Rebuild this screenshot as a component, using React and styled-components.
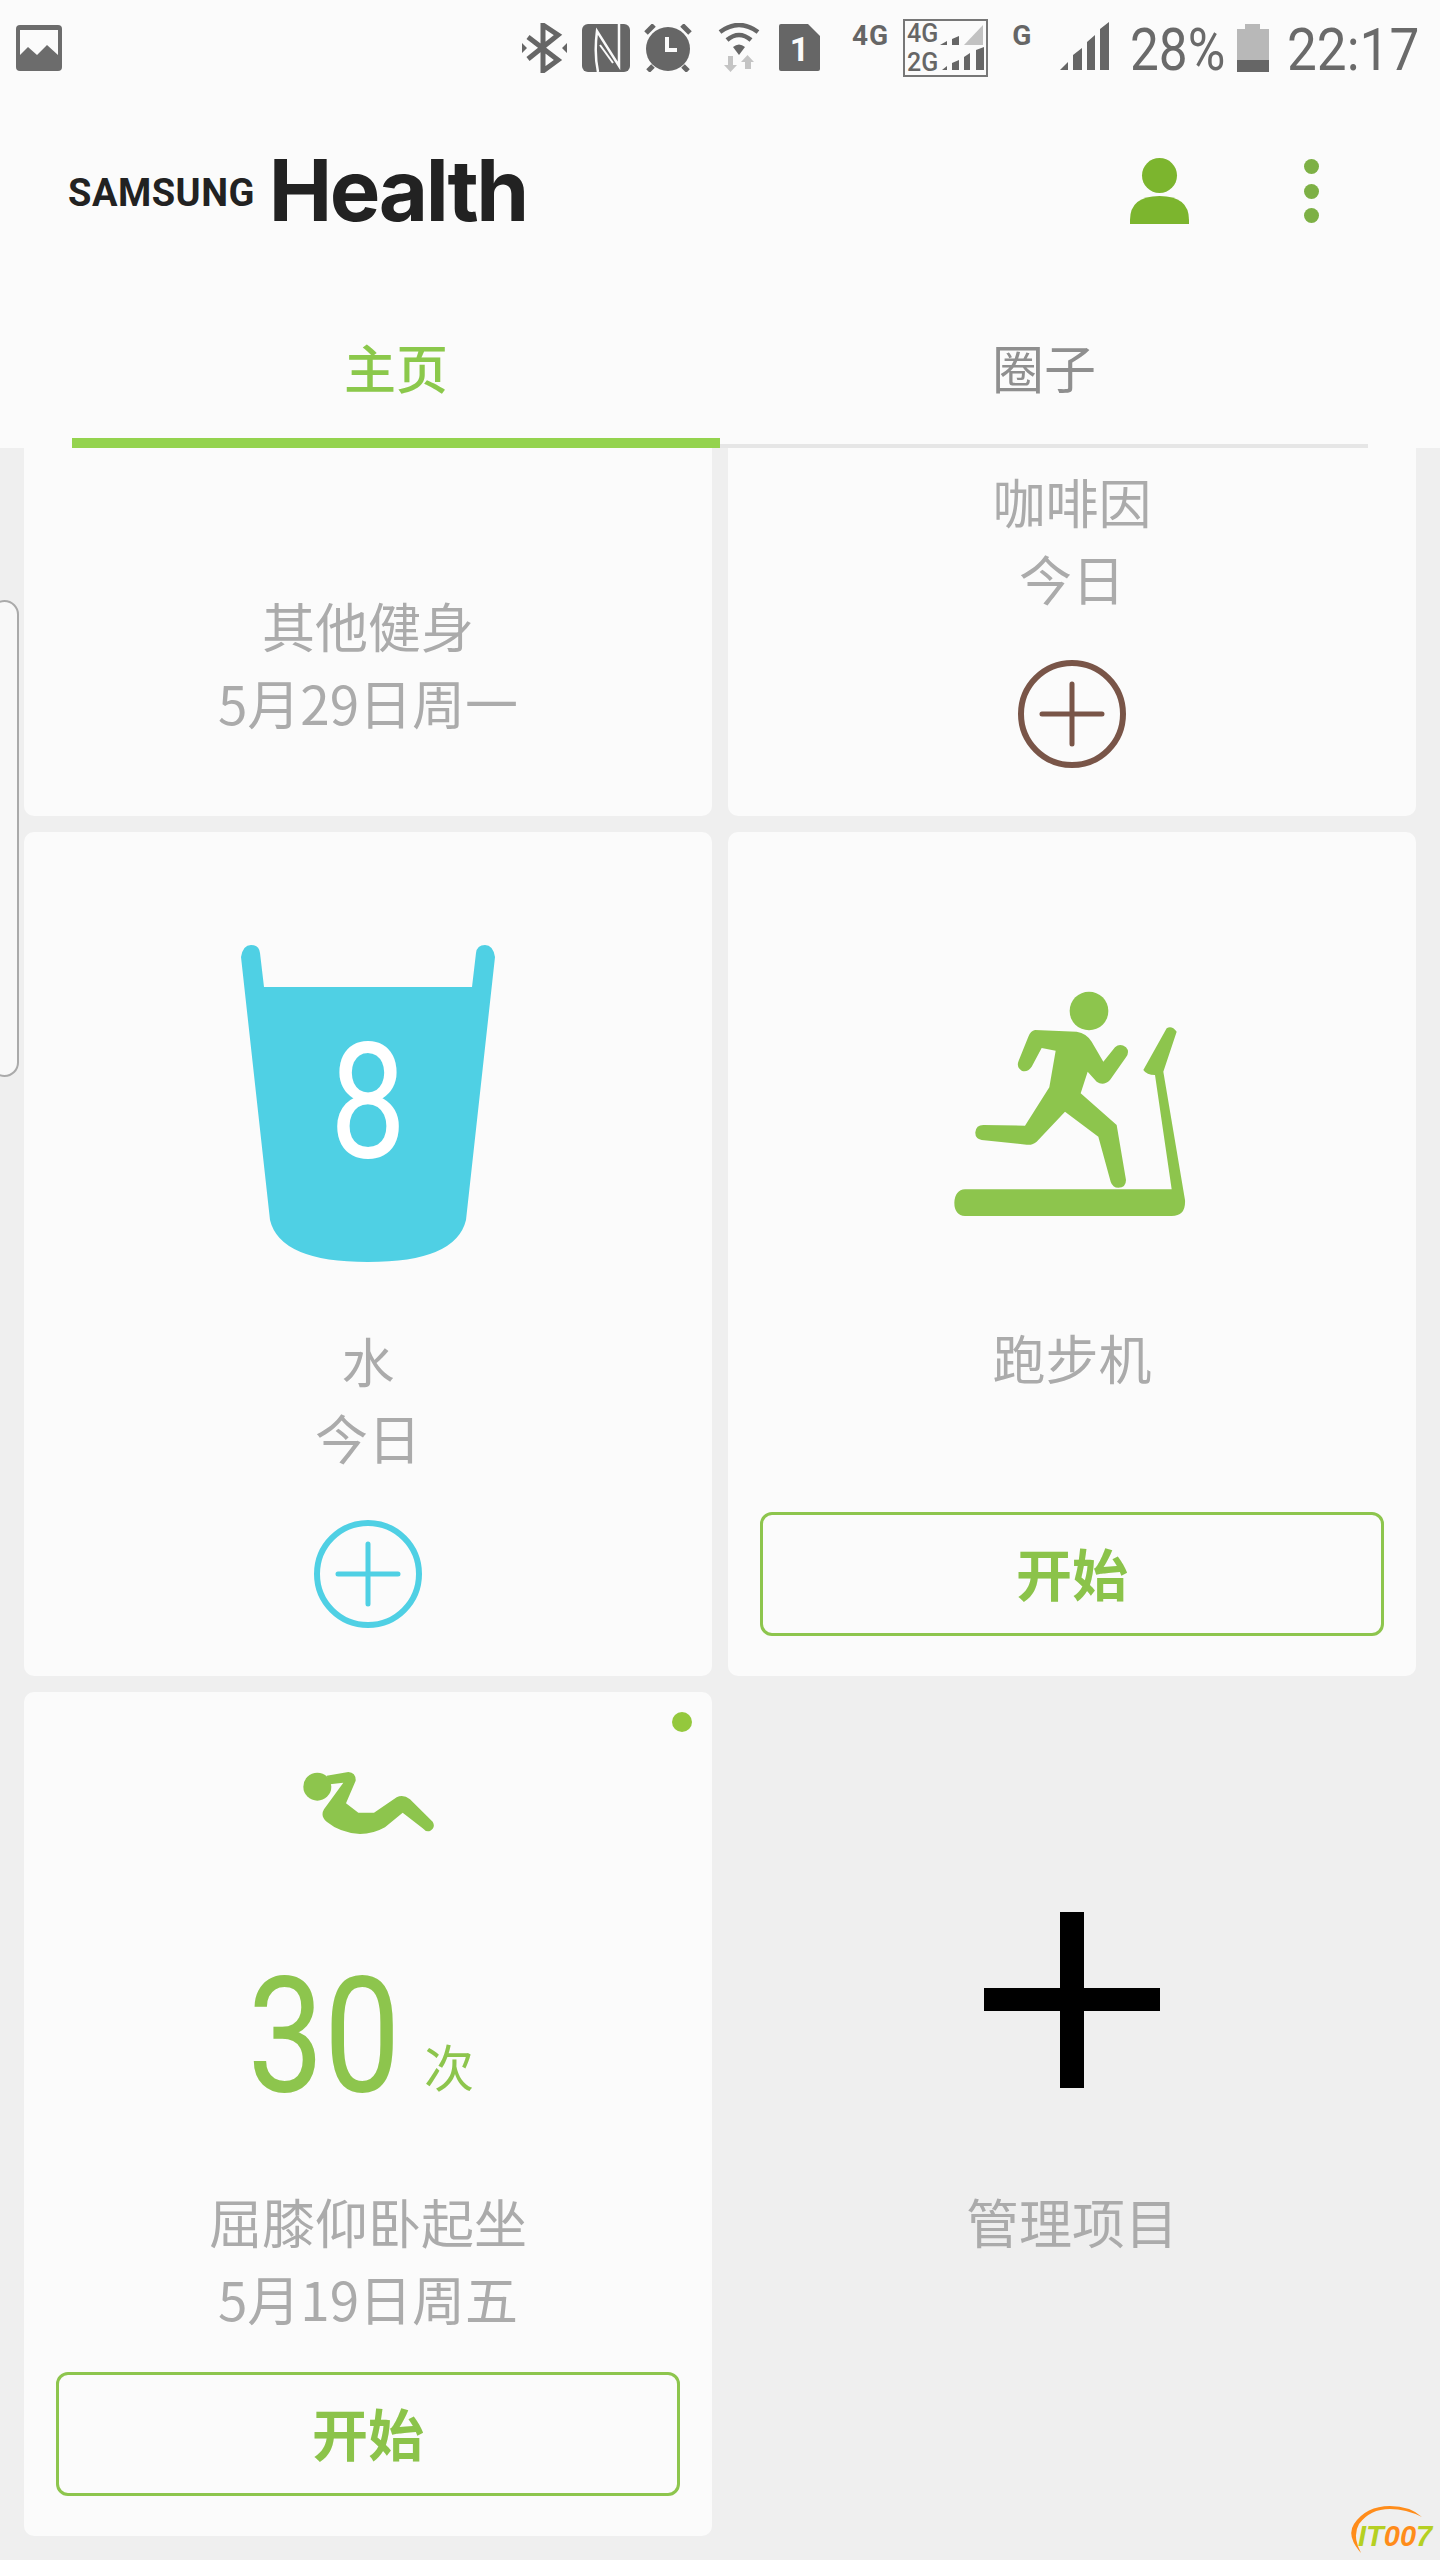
import React from 'react';
import styled, { createGlobalStyle } from 'styled-components';

const CJK = `"Noto Sans CJK SC", "Noto Sans", sans-serif`;

const GlobalStyle = createGlobalStyle`
  html, body {
    margin: 0;
    padding: 0;
    background: #efefef;
  }
  * {
    box-sizing: border-box;
  }
`;

const Page = styled.div`
  position: relative;
  width: 1440px;
  height: 2560px;
  overflow: hidden;
  background: #efefef;
  font-family: ${CJK};
`;

const Header = styled.header`
  background: #fbfbfb;
  height: 448px;
`;

const StatusBar = styled.div`
  display: flex;
  align-items: flex-start;
  height: 96px;
  padding: 0 22px 0 16px;
  color: #666;
`;

const StatusIcon = styled.svg`
  display: block;
  flex: none;
  margin-left: ${(p) => p.$ml || 0}px;
  margin-top: ${(p) => p.$mt || 0}px;
`;

const StatusText = styled.span`
  flex: none;
  width: ${(p) => p.$w}px;
  margin-left: ${(p) => p.$ml || 0}px;
  font-family: Roboto, sans-serif;
  font-size: 59px;
  line-height: 70px;
  margin-top: 15px;
  color: #6a6a6a;
  white-space: nowrap;
  transform: scaleX(${(p) => p.$sx});
  transform-origin: left center;
`;

const SmallNet = styled.span`
  flex: none;
  margin-left: ${(p) => p.$ml || 0}px;
  margin-top: 19px;
  font-family: Roboto, sans-serif;
  font-size: 28px;
  font-weight: 700;
  line-height: 34px;
  letter-spacing: 1px;
  color: #666;
`;

const AppBar = styled.div`
  display: flex;
  align-items: center;
  height: 190px;
  padding: 0 121px 0 68px;
`;

const Logo = styled.div`
  display: flex;
  align-items: baseline;
  gap: 14px;
  color: #222;
  margin-right: auto;
`;

const LogoBrand = styled.span`
  font-family: Roboto, sans-serif;
  font-size: 38px;
  font-weight: 700;
  letter-spacing: 0.5px;
  transform: translateY(-15px);
`;

const LogoName = styled.span`
  font-family: Inter, sans-serif;
  font-size: 85px;
  font-weight: 700;
  letter-spacing: -2.5px;
  line-height: 90px;
`;

const Dots = styled.div`
  display: flex;
  flex-direction: column;
  gap: 9.5px;
  margin-left: 115px;
`;

const Dot = styled.span`
  width: 15px;
  height: 15px;
  border-radius: 50%;
  background: #7db045;
`;

const Tabs = styled.div`
  display: flex;
  height: 162px;
  margin: 0 72px;
`;

const Tab = styled.div`
  position: relative;
  flex: 1;
  display: flex;
  align-items: center;
  justify-content: center;
  padding-bottom: 10px;
  padding-top: 8px;
  font-size: 52px;
  font-weight: ${(p) => (p.$active ? 500 : 400)};
  color: ${(p) => (p.$active ? '#8bc84b' : '#8f8f8f')};

  &::after {
    content: '';
    position: absolute;
    left: 0;
    right: 0;
    bottom: 0;
    height: ${(p) => (p.$active ? 10 : 4)}px;
    background: ${(p) => (p.$active ? '#94d34e' : '#e6e6e6')};
  }
`;

const Grid = styled.main`
  display: grid;
  grid-template-columns: 688px 688px;
  grid-template-rows: 368px 844px 844px;
  gap: 16px;
  padding: 0 24px;
`;

const Card = styled.section`
  position: relative;
  display: flex;
  flex-direction: column;
  align-items: center;
  justify-content: ${(p) => (p.$clipped ? 'flex-end' : 'flex-start')};
  padding-bottom: ${(p) => p.$pb || 0}px;
  background: ${(p) => (p.$bare ? 'transparent' : '#fbfbfb')};
  border-radius: ${(p) => (p.$clipped ? '0 0 10px 10px' : '10px')};
`;

const Labels = styled.div`
  margin-top: ${(p) => p.$mt || 0}px;
  font-size: 53px;
  line-height: 77px;
  color: #ababab;
  text-align: center;
  white-space: nowrap;
`;

const RoundAdd = styled.svg`
  display: block;
  flex: none;
  margin-top: ${(p) => p.$mt || 0}px;
  color: ${(p) => p.$color};
`;

const CupWrap = styled.div`
  position: relative;
  width: 254px;
  height: 317px;
  margin-top: 113px;
`;

const CupCount = styled.span`
  position: absolute;
  left: 0;
  right: 0;
  top: 62px;
  text-align: center;
  font-family: Roboto, sans-serif;
  font-size: 162px;
  line-height: 190px;
  color: #fff;
  transform: scaleX(0.84);
`;

const Drawing = styled.svg`
  display: block;
  flex: none;
  margin-top: ${(p) => p.$mt || 0}px;
  margin-left: ${(p) => p.$ml || 0}px;
  margin-right: ${(p) => p.$mr || 0}px;
  color: #8dc54d;
`;

const StartButton = styled.button`
  width: 624px;
  height: 124px;
  margin-top: auto;
  margin-bottom: 40px;
  padding: 0 0 5px;
  border: 3px solid #8dc54d;
  border-radius: 12px;
  background: transparent;
  font-family: ${CJK};
  font-size: 56px;
  font-weight: 700;
  color: #8bc34a;
`;

const NewDot = styled.span`
  position: absolute;
  top: 20px;
  right: 20px;
  width: 20px;
  height: 20px;
  border-radius: 50%;
  background: #94c83d;
`;

const NumberRow = styled.div`
  display: flex;
  align-items: baseline;
  margin-top: 81px;
  margin-right: 17px;
  color: #8dc54d;
`;

const Count = styled.span`
  width: 179px;
  font-family: Roboto, sans-serif;
  font-size: 162px;
  line-height: 190px;
  white-space: nowrap;
  transform: scaleX(0.84);
  transform-origin: left center;
  padding-left: 3px;
`;

const Unit = styled.span`
  font-size: 50px;
  line-height: 50px;
  transform: translateY(-4px);
`;

const EdgeHandle = styled.div`
  position: absolute;
  left: -10px;
  top: 600px;
  width: 29px;
  height: 477px;
  background: #f8f8f8;
  border: 2px solid #aaa;
  border-radius: 16px;
`;

const Watermark = styled.svg`
  position: absolute;
  right: 4px;
  bottom: 2px;
`;

function ImageIcon() {
  return (
    <StatusIcon width="46" height="46" viewBox="0 0 46 46" $mt={25}>
      <rect width="46" height="46" rx="4" fill="#6c6c6c" />
      <path d="M4 5H42V30L31 20L21 30L12 22L4 30Z" fill="#fbfbfb" />
    </StatusIcon>
  );
}

function BluetoothIcon() {
  return (
    <StatusIcon width="45" height="50" viewBox="0 0 45 50" $ml={460} $mt={23}>
      <path d="M6 14L36 37L21 48V2L36 12L6 36" fill="none" stroke="#666" strokeWidth="5" />
      <path d="M0 20L5 25L0 30ZM45 20L40 25L45 30Z" fill="#666" />
    </StatusIcon>
  );
}

function NfcIcon() {
  return (
    <StatusIcon width="48" height="48" viewBox="0 0 48 48" $ml={15} $mt={24}>
      <rect width="48" height="48" rx="6" fill="#666" />
      <path d="M16 48Q12 30 15 7L37 42V0" fill="none" stroke="#fbfbfb" strokeWidth="2.5" />
      <path d="M18 21L31 39" fill="none" stroke="#fbfbfb" strokeWidth="2" />
    </StatusIcon>
  );
}

function AlarmIcon() {
  return (
    <StatusIcon width="48" height="48" viewBox="0 0 48 48" $ml={14} $mt={24}>
      <circle cx="24" cy="25" r="22" fill="#666" />
      <path d="M23 13V26H33" fill="none" stroke="#fbfbfb" strokeWidth="4" />
      <path d="M2 9L10 1M38 1L46 9M4 47L9 42M44 47L39 42" stroke="#666" strokeWidth="5" />
    </StatusIcon>
  );
}

function WifiIcon() {
  return (
    <StatusIcon width="43" height="50" viewBox="0 0 43 50" $ml={26} $mt={23}>
      <path d="M2 9Q21 -5 40 9M9 17Q21 7 33 17" fill="none" stroke="#666" strokeWidth="4.5" />
      <path d="M15 24Q21 19 27 24L21 32Z" fill="#666" />
      <path d="M10 33H15V42H19L12.5 49L6 42H10Z" fill="#c4c4c4" />
      <path d="M29.5 32L36 39H33V46H27V39H23Z" fill="#c4c4c4" />
    </StatusIcon>
  );
}

function SimIcon() {
  return (
    <StatusIcon width="41" height="47" viewBox="0 0 41 47" $ml={18} $mt={24}>
      <path d="M2 0H29L41 12V45Q41 47 39 47H2Q0 47 0 45V2Q0 0 2 0Z" fill="#666" />
      <text x="20.5" y="37" textAnchor="middle" fontFamily="Roboto, sans-serif" fontSize="34" fontWeight="700" fill="#fbfbfb">1</text>
    </StatusIcon>
  );
}

function DualNetIcon() {
  return (
    <StatusIcon width="85" height="58" viewBox="0 0 85 58" $ml={14} $mt={19}>
      <rect x="1" y="1" width="83" height="56" fill="none" stroke="#777" strokeWidth="2" />
      <g fontFamily="Roboto, sans-serif" fontSize="25" fontWeight="500" fill="#666">
        <text x="4" y="23">4G</text>
        <text x="4" y="52">2G</text>
      </g>
      <path d="M61 26L80 6V26Z" fill="#c2c2c2" />
      <path d="M37 26L44 22V26ZM49 26V20L56 17V26Z" fill="#666" />
      <path d="M39 51L44 47V51ZM49 51V44L56 41V51ZM61 51V38L67 34V51ZM73 51V31L81 28V51Z" fill="#666" />
    </StatusIcon>
  );
}

function SignalIcon() {
  return (
    <StatusIcon width="49" height="48" viewBox="0 0 49 48" $ml={28} $mt={22}>
      <path d="M0 48L8 40V48ZM13 48V33L22 26V48ZM27 48V20L35 13V48ZM40 48V7L49 0V48Z" fill="#666" />
    </StatusIcon>
  );
}

function BatteryIcon() {
  return (
    <StatusIcon width="32" height="48" viewBox="0 0 32 48" $mt={24}>
      <path d="M8 0H23V5H32V36H0V5H8Z" fill="#b8b8b8" />
      <rect y="36" width="32" height="12" fill="#666" />
    </StatusIcon>
  );
}

function PersonIcon() {
  return (
    <svg width="59" height="66" viewBox="0 0 59 66">
      <ellipse cx="29.5" cy="17.5" rx="17.5" ry="17.5" fill="#7cb52e" />
      <path d="M0 66V62Q0 38 29.5 38Q59 38 59 62V66Z" fill="#7cb52e" />
    </svg>
  );
}

function AddCircle({ color, mt }) {
  return (
    <RoundAdd width="108" height="108" viewBox="0 0 108 108" $color={color} $mt={mt}>
      <circle cx="54" cy="54" r="51" fill="none" stroke="currentColor" strokeWidth="6" />
      <path d="M24 54H84M54 24V84" stroke="currentColor" strokeWidth="5" strokeLinecap="round" />
    </RoundAdd>
  );
}

function WaterCup() {
  return (
    <svg width="254" height="317" viewBox="0 0 254 317">
      <path
        d="M0 12Q2 0 10 0Q18 0 19 8L23 42H231L235 8Q236 0 244 0Q252 0 254 12L225 275Q215 317 127 317Q39 317 29 275Z"
        fill="#4fd0e4"
      />
    </svg>
  );
}

function TreadmillIcon() {
  return (
    <Drawing width="300" height="280" viewBox="0 0 900 840" $mt={128} $mr={4}>
      <g fill="currentColor">
        <circle cx="507" cy="153" r="58" />
        <path d="M345 210L470 215Q500 220 515 245L550 305L585 262Q600 248 618 262Q630 275 618 292L570 360Q550 380 530 365L503 335L482 400L590 495L618 660Q618 683 595 683Q578 683 572 665L535 530L435 455L350 545Q338 556 320 554L185 540Q165 535 166 517Q168 495 190 495L315 497L388 382L407 272L365 264L335 320Q322 338 305 332Q288 322 296 302L325 230Q332 212 345 210Z" />
        <path d="M135 688H755L705 345Q680 345 670 330L740 205Q755 195 770 215L730 335L795 720Q798 768 755 768H135Q103 765 103 728Q105 690 135 688Z" />
      </g>
    </Drawing>
  );
}

function SitupIcon() {
  return (
    <Drawing width="200" height="120" viewBox="0 0 600 360" $mt={48} $ml={24}>
      <g fill="currentColor">
        <circle cx="112" cy="140" r="42" />
        <path d="M140 107L205 96Q228 98 227 122L198 190L235 218H282L350 172Q370 162 390 178L458 245Q468 262 450 273Q438 277 428 265L368 218L315 262Q280 282 240 282Q180 278 140 245Q120 228 132 208L190 128L150 133Z" />
      </g>
    </Drawing>
  );
}

function BlackPlus() {
  return (
    <Drawing width="176" height="176" viewBox="0 0 176 176" $mt={220}>
      <path d="M76 0H100V76H176V99H100V176H76V99H0V76H76Z" fill="#000" />
    </Drawing>
  );
}

export default function App() {
  return (
    <Page>
      <GlobalStyle />
      <Header>
        <StatusBar>
          <ImageIcon />
          <BluetoothIcon />
          <NfcIcon />
          <AlarmIcon />
          <WifiIcon />
          <SimIcon />
          <SmallNet $ml={32}>4G</SmallNet>
          <DualNetIcon />
          <SmallNet $ml={24}>G</SmallNet>
          <SignalIcon />
          <StatusText $w={107} $ml={21} $sx={0.87}>28%</StatusText>
          <BatteryIcon />
          <StatusText $w={128} $ml={18} $sx={0.9}>22:17</StatusText>
        </StatusBar>
        <AppBar>
          <Logo>
            <LogoBrand>SAMSUNG</LogoBrand>
            <LogoName>Health</LogoName>
          </Logo>
          <PersonIcon />
          <Dots>
            <Dot />
            <Dot />
            <Dot />
          </Dots>
        </AppBar>
        <Tabs>
          <Tab $active>主页</Tab>
          <Tab>圈子</Tab>
        </Tabs>
      </Header>
      <Grid>
        <Card $clipped $pb={75}>
          <Labels>
            其他健身
            <br />
            5月29日周一
          </Labels>
        </Card>
        <Card $clipped $pb={48}>
          <Labels>
            咖啡因
            <br />
            今日
          </Labels>
          <AddCircle color="#795548" mt={43} />
        </Card>
        <Card>
          <CupWrap>
            <WaterCup />
            <CupCount>8</CupCount>
          </CupWrap>
          <Labels $mt={60}>
            水
            <br />
            今日
          </Labels>
          <AddCircle color="#4fd0e4" mt={44} />
        </Card>
        <Card>
          <TreadmillIcon />
          <Labels $mt={79}>跑步机</Labels>
          <StartButton>开始</StartButton>
        </Card>
        <Card>
          <NewDot />
          <SitupIcon />
          <NumberRow>
            <Count>30</Count>
            <Unit>次</Unit>
          </NumberRow>
          <Labels $mt={52}>
            屈膝仰卧起坐
            <br />
            5月19日周五
          </Labels>
          <StartButton>开始</StartButton>
        </Card>
        <Card $bare>
          <BlackPlus />
          <Labels $mt={95}>管理项目</Labels>
        </Card>
      </Grid>
      <EdgeHandle />
      <Watermark width="88" height="52" viewBox="0 0 88 52">
        <path d="M13 47Q-2 30 6 18Q18 0 42 0Q62 0 74 11Q58 3 42 3Q22 3 11 18Q4 30 13 47Z" fill="#ff8c1a" />
        <text x="10" y="40" fontFamily='"Liberation Sans", sans-serif' fontSize="29" fontWeight="700" fontStyle="italic" fill="#b5d022">
          IT<tspan fill="#ff8c1a">00</tspan>7
        </text>
      </Watermark>
    </Page>
  );
}
